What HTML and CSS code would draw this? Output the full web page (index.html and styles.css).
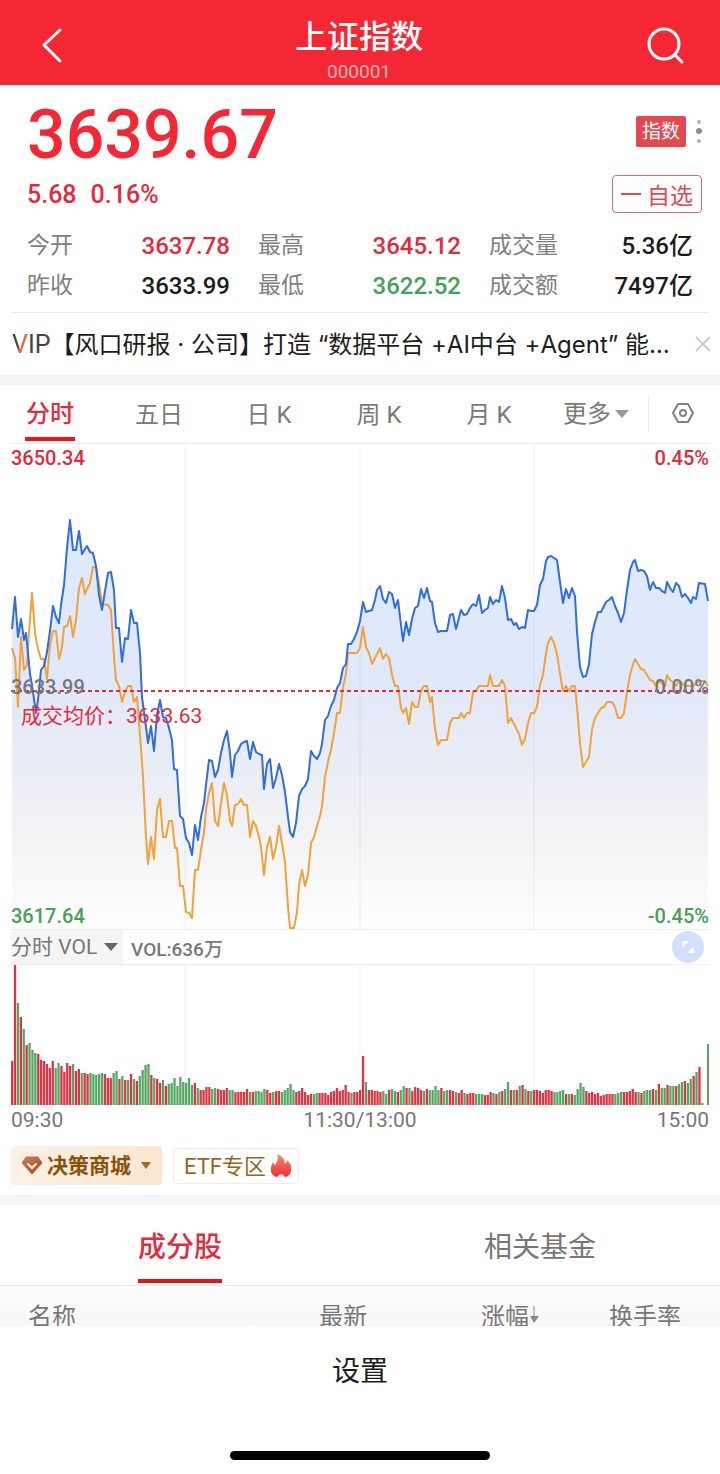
FILE: index.html
```
<!DOCTYPE html>
<html lang="zh-CN">
<head>
<meta charset="utf-8" />
<meta name="viewport" content="width=device-width, initial-scale=1" />
<title>上证指数</title>
<link rel="stylesheet" href="styles.css">
</head>
<body>
  <header class="top">
    <button class="top-btn" type="button" aria-label="返回">
      <svg width="40" height="40" viewBox="0 0 40 40"><path d="M28 5 L12 20 L28 36" /></svg>
    </button>
    <div class="top-title">
      <h1>上证指数</h1>
      <span>000001</span>
    </div>
    <button class="top-btn" type="button" aria-label="搜索">
      <svg width="40" height="40" viewBox="0 0 40 40"><circle cx="18" cy="19" r="15" /><path d="M29 30 L36 37" /></svg>
    </button>
  </header>

  <!-- 行情 -->
  <section class="quote">
    <div class="row">
      <div class="price">3639.67</div>
      <div class="mark">
        <span class="tag">指数</span>
        <svg width="6" height="26" viewBox="0 0 6 26"><circle cx="3" cy="4" r="2" fill="#b5b5b5" /><circle cx="3" cy="13" r="3" fill="#8c8c8c" /><circle cx="3" cy="23" r="2" fill="#b5b5b5" /></svg>
      </div>
    </div>
    <div class="row">
      <div class="change"><span>5.68</span><span>0.16%</span></div>
      <button class="fav" type="button"><i></i>自选</button>
    </div>
    <dl class="stats">
      <div><dt>今开</dt><dd class="up">3637.78</dd></div>
      <div><dt>最高</dt><dd class="up">3645.12</dd></div>
      <div><dt>成交量</dt><dd>5.36亿</dd></div>
      <div><dt>昨收</dt><dd>3633.99</dd></div>
      <div><dt>最低</dt><dd class="down">3622.52</dd></div>
      <div><dt>成交额</dt><dd>7497亿</dd></div>
    </dl>
  </section>

  <section class="vip">
    <span class="vip-logo"><b>V</b>IP</span>
    <a href="#">【风口研报 · 公司】打造 “数据平台 +AI中台 +Agent” 能…</a>
    <button class="close" type="button" aria-label="关闭">
      <svg width="16" height="16" viewBox="0 0 16 16"><path d="M1 1 L15 15 M15 1 L1 15" /></svg>
    </button>
  </section>

  <!-- 周期 -->
  <nav class="period">
    <button class="on" type="button">分时</button>
    <button type="button">五日</button>
    <button type="button">日 K</button>
    <button type="button">周 K</button>
    <button type="button">月 K</button>
    <label class="drop">
      <select aria-label="更多周期"><option>更多</option></select>
      <svg width="14" height="8" viewBox="0 0 14 8"><path d="M0 0 H14 L7 8 Z" /></svg>
    </label>
    <button class="set" type="button" aria-label="图表设置">
      <svg width="22" height="20" viewBox="0 0 22 20"><path d="M6 1 H16 L21 10 L16 19 H6 L1 10 Z" /><circle cx="11" cy="10" r="3" /></svg>
    </button>
  </nav>

  <section class="chart">
    <div class="line-box">
      <svg class="line" viewBox="11 444 698 485" preserveAspectRatio="none">
        <defs>
          <linearGradient id="fill" gradientUnits="userSpaceOnUse" x1="0" y1="520" x2="0" y2="929">
            <stop offset="0" stop-color="#dfeafc" />
            <stop offset="0.4" stop-color="#dfe9fb" />
            <stop offset="0.44" stop-color="#e4e9f8" />
            <stop offset="0.6" stop-color="#e9edf6" />
            <stop offset="0.75" stop-color="#f1f2f4" />
            <stop offset="1" stop-color="#fefefe" />
          </linearGradient>
        </defs>
        <path id="area" fill="url(#fill)" />
        <path class="grid" d="M185 444 V929 M360 444 V929 M534 444 V929" />
        <polyline id="avg" class="avg" />
        <polyline id="now" class="now" />
        <path class="zero" d="M11 691 H709" />
      </svg>
      <span class="lab tl up">3650.34</span>
      <span class="lab tr up">0.45%</span>
      <span class="lab ml">3633.99</span>
      <span class="lab mr">0.00%</span>
      <span class="lab avg-lab up">成交均价：3633.63</span>
      <span class="lab bl down">3617.64</span>
      <span class="lab br down">-0.45%</span>
    </div>

    <div class="vol-bar">
      <label class="drop vol-drop">
        <select aria-label="指标"><option>分时 VOL</option></select>
        <svg width="14" height="8" viewBox="0 0 14 8"><path d="M0 0 H14 L7 8 Z" /></svg>
      </label>
      <span class="vol-num">VOL:636万</span>
      <button class="full" type="button" aria-label="全屏">
        <svg width="32" height="32" viewBox="0 0 32 32"><circle cx="16" cy="16" r="16" fill="#d2e0fd" /><path d="M10 10 H17 L10 17 Z M22 15 V22 H15 Z" fill="#fff" /></svg>
      </button>
    </div>

    <svg id="vol" class="vol" viewBox="0 0 698 140" preserveAspectRatio="none">
      <path class="grid" d="M174 0 V140 M349 0 V140 M523 0 V140" />
    </svg>
    <div class="axis"><span>09:30</span><span>11:30/13:00</span><span>15:00</span></div>
  </section>

  <section class="links">
    <button class="mall" type="button">
      <svg width="22" height="19" viewBox="0 0 22 19">
        <defs><linearGradient id="gem" x1="0" y1="0" x2="1" y2="1"><stop offset="0" stop-color="#cf7d5c" /><stop offset="1" stop-color="#9c4f22" /></linearGradient></defs>
        <path d="M5 1 H17 L21 7 L11 18 L1 7 Z" fill="url(#gem)" stroke="url(#gem)" stroke-width="1" stroke-linejoin="round" />
        <path d="M7 8 L11 12 L15 8" fill="none" stroke="#fdf0e0" stroke-width="2" stroke-linecap="round" />
      </svg>
      <span>决策商城</span>
      <svg class="tri" width="10" height="7" viewBox="0 0 10 7"><path d="M0 0 H10 L5 7 Z" fill="#a8681c" /></svg>
    </button>
    <a class="etf" href="#"><span>ETF专区</span>
      <svg width="22" height="24" viewBox="0 0 22 24">
        <defs><linearGradient id="fire" x1="0" y1="0" x2="0" y2="1"><stop offset="0" stop-color="#f98a70" /><stop offset="1" stop-color="#e8322f" /></linearGradient></defs>
        <path d="M7 0 C12 2 15 5 15 10 C16 9 17 8 17 6 C20 9 22 12 21 16 C21 20 18 23 15 23 L13 21 C12 20 10 20 9 21 L7 23 C3 22 0 19 1 14 C1 12 2 10 3 8 C4 10 4 10 5 11 C7 8 9 4 7 0 Z" fill="url(#fire)" />
      </svg>
    </a>
  </section>

  <!-- 成分股 -->
  <nav class="tabs">
    <button class="on" type="button">成分股</button>
    <button type="button">相关基金</button>
  </nav>
  <table class="list">
    <thead>
      <tr>
        <th>名称</th>
        <th>最新</th>
        <th>涨幅<svg width="11" height="20" viewBox="0 0 11 20"><path d="M5 1 V13" stroke="#888" stroke-width="1" /><path d="M1 11 H10 L5 18 Z" fill="#888" /></svg></th>
        <th>换手率</th>
      </tr>
    </thead>
  </table>

  <footer class="sheet">
    <button type="button">设置</button>
    <div class="home"></div>
  </footer>
  <script src="chart.js"></script>
</body>
</html>
```

FILE: styles.css
```
*{
  margin:0;
  padding:0;
  box-sizing:border-box;
}
body{
  background:#fff;
  color:#1c1c1c;
  font-family:Roboto,"Noto Sans CJK SC",sans-serif;
}
button,select{
  border:0;
  background:none;
  color:inherit;
  font:inherit;
}
a{
  color:inherit;
  text-decoration:none;
}
svg{
  display:block;
}
.up{
  color:#e32b3c;
}
.down{
  color:#45a058;
}

/* 顶部 */
.top{
  display:flex;
  justify-content:space-between;
  align-items:center;
  height:85px;
  padding:5px 34px 0 32px;
  background:#f62734;
  color:#fff;
}
.top-btn svg{
  fill:none;
  stroke:#fff;
  stroke-width:3;
  stroke-linecap:round;
  stroke-linejoin:round;
}
.top-title{
  padding-top:10px;
  text-align:center;
}
.top-title h1{
  font-size:32px;
  font-weight:500;
  line-height:44px;
}
.top-title span{
  display:block;
  font-size:19px;
  line-height:26px;
  color:#ffb3b6;
}

/* 行情 */
.quote{
  margin:0 11px;
  padding:12px 7px 6px 16px;
  border-bottom:1px solid #ececec;
}
.row{
  display:flex;
  justify-content:space-between;
  align-items:center;
}
.price{
  font-size:68px;
  line-height:76px;
  font-weight:500;
  color:#f62734;
}
.mark{
  display:flex;
  align-items:center;
  gap:10px;
  padding-bottom:8px;
}
.tag{
  padding:0 6px;
  border-radius:2px;
  background:#e5484f;
  color:#fff;
  font-size:19px;
  line-height:31px;
}
.change{
  display:flex;
  gap:14px;
  font-size:25px;
  font-weight:500;
  color:#e32b3c;
}
.fav{
  display:flex;
  align-items:center;
  gap:6px;
  height:38px;
  padding:0 8px;
  border:1px solid #e06a70;
  border-radius:4px;
  color:#dd4a50;
  font-size:23px;
}
.fav i{
  width:20px;
  height:2px;
  background:#dd4a50;
}
.row + .row{
  margin-top:2px;
}
.stats{
  display:grid;
  grid-template-columns:203fr 203fr 204fr;
  column-gap:28px;
  margin:13px 9px 0 0;
}
.stats div{
  display:flex;
  justify-content:space-between;
  height:40px;
  line-height:40px;
}
.stats dt{
  font-size:23px;
  color:#808080;
}
.stats dd{
  font-size:24px;
  font-weight:500;
}

.vip{
  display:flex;
  align-items:center;
  height:62px;
  padding:0 9px 0 12px;
}
.vip-logo{
  font-size:25px;
  color:#444;
}
.vip-logo b{
  font-weight:400;
  background:linear-gradient(100deg,#444 45%,#f0603a 50%);
  background-clip:text;
  -webkit-background-clip:text;
  color:transparent;
}
.vip a{
  flex:1;
  overflow:hidden;
  padding-bottom:4px;
  white-space:nowrap;
  text-overflow:ellipsis;
  font-family:Inter,"Noto Sans CJK SC",sans-serif;
  font-size:24px;
}
.close{
  margin-left:16px;
}
.close svg{
  fill:none;
  stroke:#ccc;
  stroke-width:2;
}

/* 周期 */
.period{
  display:grid;
  grid-template-columns:104fr 110fr 110fr 110fr 110fr 104fr 72fr;
  height:68px;
  border-top:10px solid #f5f5f5;
  font-size:24px;
  color:#7a7a7a;
}
.period button{
  height:58px;
  padding-bottom:4px;
}
.period .on{
  justify-self:start;
  height:56px;
  margin-left:25px;
  padding:0 1px;
  border-bottom:4px solid #f51414;
  color:#e32b3c;
  font-weight:500;
}
.drop{
  display:flex;
  align-items:center;
  justify-content:center;
  gap:4px;
}
.drop select{
  appearance:none;
}
.drop svg{
  fill:#999;
}
.period .set{
  display:flex;
  align-items:center;
  justify-content:center;
  height:36px;
  margin-top:10px;
  padding:0 4px 0 0;
  border-left:1px solid #ececec;
}
.set svg{
  fill:none;
  stroke:#808080;
  stroke-width:2;
  stroke-linejoin:round;
}

/* 图表 */
.chart{
  margin:0 11px;
}
.line-box{
  position:relative;
  border-top:1px solid #ececec;
  border-bottom:1px solid #ececec;
}
.line{
  width:100%;
  height:485px;
}
.line polyline{
  fill:none;
  stroke-width:2;
  stroke-linejoin:round;
}
.avg{
  stroke:#f0a23c;
}
.now{
  stroke:#2f6de0;
}
.zero{
  stroke:#e32b3c;
  stroke-width:2;
  stroke-dasharray:4 3;
}
.grid{
  fill:none;
  stroke:#000;
  stroke-opacity:.06;
}
.lab{
  position:absolute;
  font-size:20px;
  font-weight:500;
  line-height:26px;
}
.tl,.tr{
  top:1px;
}
.ml,.mr{
  top:230px;
  color:#777;
}
.bl,.br{
  bottom:0;
}
.tl,.ml,.bl{
  left:0;
}
.tr,.mr,.br{
  right:0;
}
.avg-lab{
  top:259px;
  left:10px;
  font-size:21px;
  font-weight:400;
}
.vol-bar{
  display:flex;
  align-items:center;
  height:35px;
  border-bottom:1px solid #ececec;
  color:#777;
}
.vol-drop{
  height:34px;
  padding-right:5px;
  gap:6px;
  background:#f5f5f5;
  font-size:21px;
}
.vol-drop svg{
  fill:#666;
}
.vol-num{
  margin-left:8px;
  font-size:19px;
  font-weight:500;
}
.full{
  margin:0 5px 0 auto;
}
.vol{
  width:100%;
  height:140px;
}
.axis{
  display:flex;
  justify-content:space-between;
  font-size:21px;
  line-height:30px;
  color:#777;
}

.links{
  display:flex;
  align-items:center;
  gap:11px;
  padding:11px 11px 10px;
}
.links span{
  padding-bottom:3px;
}
.mall{
  display:flex;
  align-items:center;
  gap:4px;
  height:39px;
  padding:0 11px 0 10px;
  border-radius:4px;
  background:linear-gradient(90deg,#fbf1e6,#f9e6d0);
  color:#8a5208;
  font-size:21px;
  font-weight:700;
}
.tri{
  margin-left:6px;
}
.etf{
  display:flex;
  align-items:center;
  gap:4px;
  height:36px;
  padding:0 6px 0 10px;
  border:1px solid #f7ecd9;
  border-radius:4px;
  color:#94661e;
  font-size:22px;
}

/* 成分股 */
.tabs{
  display:grid;
  grid-template-columns:1fr 1fr;
  justify-items:center;
  height:91px;
  border-top:10px solid #f5f5f5;
  border-bottom:1px solid #e8e8e8;
  font-size:28px;
  color:#777;
}
.tabs button{
  height:78px;
  padding-top:6px;
  border-bottom:4px solid transparent;
}
.tabs .on{
  border-color:#e31414;
  color:#e32b3c;
  font-weight:500;
}
.list{
  width:100%;
  border-collapse:collapse;
  table-layout:fixed;
  background:linear-gradient(#fdfdfd,#f4f4f4);
}
.list th{
  width:24%;
  height:56px;
  padding:0;
  text-align:right;
  font-size:24px;
  font-weight:400;
  color:#777;
}
.list th:first-child{
  width:28%;
  padding-left:28px;
  text-align:left;
}
.list th:nth-child(2){
  width:23%;
}
.list th:last-child{
  width:25%;
  padding-right:39px;
}
.list th svg{
  display:inline-block;
}

/* 底部 */
.sheet{
  position:fixed;
  left:0;
  right:0;
  bottom:0;
  display:flex;
  flex-direction:column;
  justify-content:space-between;
  align-items:center;
  height:148px;
  padding:22px 0 14px;
  background:#fff;
}
.sheet button{
  font-size:28px;
  line-height:48px;
}
.home{
  width:36%;
  height:9px;
  border-radius:5px;
  background:#000;
}
```

FILE: chart.js
```
var now="12,629 15,597 18,637 21,619 24,640 26,633 30,674 32,685 36,713 38,700 41,670 44,666 47,652 50,631 53,606 56,617 59,623 61,605 64,585 67,548 70,520 73,550 76,550 79,531 82,554 85,549 87,546 90,552 93,553 96,566 99,595 102,610 105,591 108,573 111,572 114,590 116,628 119,628 122,662 125,638 128,639 131,610 134,623 137,623 140,653 142,697 "+
"146,727 148,743 151,726 154,751 157,715 160,700 163,717 166,718 169,728 172,740 174,769 177,770 180,816 183,819 186,838 189,843 192,855 195,825 198,840 201,817 204,803 206,785 209,760 212,761 215,777 218,770 221,753 224,740 227,731 230,753 232,777 235,755 238,751 241,744 244,742 247,741 250,759 253,742 256,752 259,754 262,755 264,789 267,764 270,759 273,788 276,778 279,764 282,775 285,792 288,817 290,832 293,837 296,823 299,796 302,789 305,786 308,779 311,751 314,756 317,759 320,753 322,744 325,720 328,716 331,706 334,700 337,688 340,683 343,668 346,664 348,644 351,644 354,639 357,632 "+
"360,621 363,602 366,612 369,611 372,610 375,600 377,590 380,586 383,599 386,603 389,592 392,594 395,608 398,600 401,625 403,641 406,622 409,635 412,619 415,608 418,606 421,589 424,598 427,588 430,601 432,602 435,623 438,632 441,631 447,631 450,615 453,614 456,629 459,618 461,610 464,615 467,614 470,608 473,604 476,606 479,595 482,613 485,610 488,608 490,597 493,604 496,600 499,602 502,586 505,598 508,620 511,619 514,625 516,623 519,629 522,627 525,628 528,610 531,611 534,611 "+
"537,605 540,585 543,579 546,561 548,557 551,556 554,558 557,560 560,582 563,603 566,589 569,598 572,588 575,596 577,632 580,667 583,677 586,676 589,664 592,634 595,622 598,612 601,612 604,606 606,602 609,600 612,597 615,606 618,613 621,622 624,613 627,590 630,570 633,562 635,560 638,571 641,570 644,571 647,576 650,590 653,582 656,588 659,588 662,591 665,593 667,582 670,588 673,592 676,583 679,586 682,597 685,594 688,598 691,603 693,597 696,599 699,583 705,584 708,601";

var avg="12,648 15,658 18,707 21,637 24,670 27,665 29,633 32,593 35,633 38,649 41,659 44,659 47,679 50,645 53,631 56,631 59,659 62,647 64,627 67,626 70,616 73,637 76,620 79,588 82,578 85,594 87,589 90,583 93,567 96,567 99,583 102,604 108,605 111,610 114,657 116,680 119,686 122,702 125,692 128,686 131,686 134,702 137,697 140,735 143,777 146,837 148,864 151,837 154,859 157,810 160,799 163,837 166,837 169,821 172,821 175,848 177,848 180,886 183,886 186,912 189,913 192,918 195,870 198,870 201,850 204,832 206,810 209,793 212,783 215,821 218,826 221,803 224,783 227,795 230,821 232,826 235,805 238,804 241,799 244,805 247,805 250,837 253,821 256,826 259,837 261,847 264,875 267,847 270,837 273,859 276,847 279,826 282,843 285,862 288,907 290,928 294,928 297,912 299,885 302,870 305,886 308,875 311,843 314,837 317,826 320,816 322,806 325,777 328,762 331,750 334,733 337,713 340,713 343,687 346,674 348,653 357,653 "+
"360,648 363,627 366,647 369,653 372,664 375,658 380,648 383,659 386,654 389,658 392,675 395,686 398,686 401,708 403,713 406,708 409,724 412,702 415,707 418,707 421,691 424,686 427,686 430,702 432,697 435,729 438,745 441,740 447,740 450,723 453,718 459,718 461,713 464,718 467,713 470,713 473,692 476,691 479,686 488,686 490,675 493,686 499,686 502,680 505,686 508,723 511,718 514,724 519,734 522,745 525,739 528,723 531,713 534,713 537,707 540,685 543,675 546,653 548,643 551,637 554,643 557,654 560,674 563,691 566,686 569,691 572,686 575,686 577,707 580,743 583,767 589,757 592,729 595,718 601,708 604,707 607,702 612,702 615,707 618,718 621,718 624,713 627,692 630,675 633,664 635,659 641,669 644,670 650,680 653,681 656,686 659,681 665,686 667,675 670,680 673,682 676,686 679,681 685,686 693,686 699,681 705,681 708,686";

//每分钟成交量，r涨 g跌
var vols="r44 r140 g102 r88 g76 r60 g62 g55 g52 r51 r45 r44 r41 r37 r44 g37 g42 r39 r33 r42 r39 g41 r34 r36 g32 r32 r31 g32 g31 g30 g31 g32 r31 r27 r27 g32 g34 r26 g29 r25 g25 r31 g26 r24 g29 g35 g40 g41 r30 g27 r26 r22 g25 r19 g21 g22 g27 g19 g28 g23 g22 g27 g20 r22 g17 r15 r15 r18 r18 g16 g17 r16 r15 r15 r17 g15 g15 r13 r13 r13 r13 r16 g13 r13 g14 g14 g13 g16 r15 r12 g13 r14 r14 g13 g15 g17 g21 g15 r13 r14 r17 r13 r10 r11 g11 g12 r12 r12 r12 r10 r13 r14 r17 r14 r15 r20 r13 g12 r13 r13 r15 "+
"r49 g23 r15 r15 r14 r14 r13 g14 g11 r15 g16 g14 r13 g15 g19 r17 g17 r14 r18 r17 r15 g14 r16 g15 g15 g19 g15 r17 g14 g15 r15 r14 g13 r12 r15 g12 r11 r12 r12 g11 g11 g11 r10 r10 r13 g12 r11 g13 r14 g16 g23 r15 g15 r15 g19 r20 g16 r14 g14 r15 r15 r14 r12 r15 r15 r14 g13 g13 g14 g15 r11 g11 r11 g10 g16 g22 g18 r14 r12 r13 r11 r12 r9 r10 r11 r11 r11 g11 g12 g13 r13 r13 r14 r16 r13 g13 r12 g14 g15 g15 r16 g15 r21 g17 g17 r20 g19 g19 r19 g21 g23 r24 g22 g26 r29 g33 r38 g2 g0 g61";

function $(id){
  return document.getElementById(id);
}

function drawLine(){
  $("now").setAttribute("points",now);
  $("avg").setAttribute("points",avg);
  $("area").setAttribute("d","M12 929 L"+now+" L708 929 Z");
}

function drawVol(){
  var list=vols.split(" ");
  for(var i=0;i<list.length;i++){
    var h=parseInt(list[i].slice(1));
    var bar=document.createElementNS("http://www.w3.org/2000/svg","rect");
    bar.setAttribute("x",i*2.9);
    bar.setAttribute("y",140-h);
    bar.setAttribute("width",2.3);
    bar.setAttribute("height",h);
    bar.setAttribute("fill",list[i].charAt(0)=="r"?"#dc3545":"#55a863");
    $("vol").appendChild(bar);
  }
}

drawLine();
drawVol();
```
